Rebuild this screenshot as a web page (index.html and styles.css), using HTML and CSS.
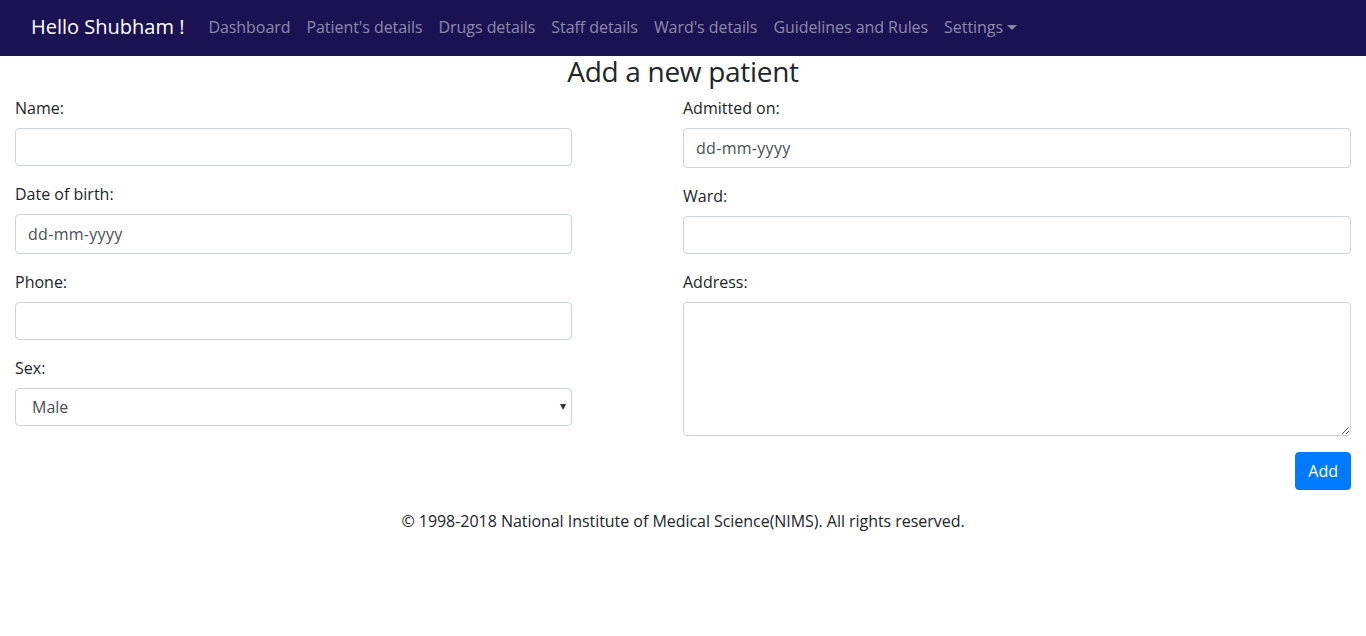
FILE: index.html
```html
<!DOCTYPE html>
<html lang="en">
<head>
<meta charset="utf-8">
<title>Add a new patient</title>
<link rel="stylesheet" href="styles.css">
</head>
<body>
<nav class="navbar">
  <div class="nav-inner">
    <a class="brand" href="#">Hello Shubham !</a>
    <ul class="nav-links">
      <li><a href="#">Dashboard</a></li>
      <li><a href="#">Patient's details</a></li>
      <li><a href="#">Drugs details</a></li>
      <li><a href="#">Staff details</a></li>
      <li><a href="#">Ward's details</a></li>
      <li><a href="#">Guidelines and Rules</a></li>
      <li><a href="#" class="dropdown">Settings<span class="caret"></span></a></li>
    </ul>
  </div>
</nav>
<main class="page">
  <h3 class="title">Add a new patient</h3>
  <form class="form-grid">
    <div class="col-left">
      <div class="group">
        <label>Name:</label>
        <input class="control" type="text">
      </div>
      <div class="group">
        <label>Date of birth:</label>
        <input class="control date" type="text" placeholder="dd-mm-yyyy">
      </div>
      <div class="group">
        <label>Phone:</label>
        <input class="control" type="text">
      </div>
      <div class="group">
        <label>Sex:</label>
        <div class="select-wrap">
          <select class="control select">
            <option>Male</option>
            <option>Female</option>
          </select>
          <span class="select-arrow">▾</span>
        </div>
      </div>
    </div>
    <div class="col-right">
      <div class="group">
        <label>Admitted on:</label>
        <input class="control date" type="text" placeholder="dd-mm-yyyy">
      </div>
      <div class="group">
        <label>Ward:</label>
        <input class="control" type="text">
      </div>
      <div class="group">
        <label>Address:</label>
        <textarea class="control area" rows="5"></textarea>
      </div>
      <div class="actions">
        <button type="button" class="btn">Add</button>
      </div>
    </div>
  </form>
  <footer class="footer">© 1998-2018 National Institute of Medical Science(NIMS). All rights reserved.</footer>
</main>
</body>
</html>
```

FILE: styles.css
```css
* { box-sizing: border-box; }
body {
  margin: 0;
  font-family: "Open Sans", "Lato", sans-serif;
  font-size: 16px;
  line-height: 1.5;
  color: #212529;
  background: #fff;
}
a { text-decoration: none; }
.navbar {
  background: #1b1254;
  height: 56px;
  padding: 0 16px;
}
.nav-inner {
  display: flex;
  align-items: center;
  height: 56px;
  padding: 0 15px 2px;
}
.brand {
  color: #fff;
  font-size: 20px;
  margin-right: 16px;
}
.nav-links {
  display: flex;
  list-style: none;
  margin: 0;
  padding: 0;
}
.nav-links a {
  display: flex;
  align-items: center;
  color: rgba(255,255,255,0.5);
  padding: 8px 8px;
  letter-spacing: -0.06px;
}
.caret {
  display: inline-block;
  margin-left: 4px;
  width: 0;
  height: 0;
  border-top: 5px solid rgba(255,255,255,0.5);
  border-left: 5px solid transparent;
  border-right: 5px solid transparent;
}
.page { padding: 0 15px; }
.title {
  margin: 0 0 10px;
  text-align: center;
  font-size: 28px;
  font-weight: 400;
  line-height: 30px;
  letter-spacing: -0.3px;
}
.form-grid {
  display: grid;
  grid-template-columns: 5fr 1fr 6fr;
}
.col-left { grid-column: 1; }
.col-right { grid-column: 3; }
.group { margin-bottom: 16px; }
.group label {
  display: block;
  margin-bottom: 8px;
  line-height: 24px;
}
.control {
  display: block;
  width: 100%;
  height: 38px;
  padding: 6px 12px;
  font-family: inherit;
  font-size: 16px;
  line-height: 1.5;
  color: #495057;
  background: #fff;
  border: 1px solid #ced4da;
  border-radius: 4px;
}
.control.date { height: 40px; }
.control.date::placeholder { color: #495057; opacity: 1; letter-spacing: 0.3px; }
.control.area { height: 134px; resize: vertical; }
.select-wrap { position: relative; }
.control.select {
  -webkit-appearance: none;
  appearance: none;
  padding-left: 16px;
}
.select-arrow {
  position: absolute;
  right: 6px;
  top: 8px;
  font-size: 12px;
  color: #333;
  pointer-events: none;
  line-height: 20px;
}
.actions {
  display: flex;
  justify-content: flex-end;
}
.btn {
  height: 38px;
  padding: 6px 12px;
  font-family: inherit;
  font-size: 16px;
  line-height: 1.5;
  color: #fff;
  background: #007bff;
  border: 1px solid #007bff;
  border-radius: 4px;
}
.footer {
  text-align: center;
  margin-top: 19px;
  line-height: 24px;
  letter-spacing: -0.04px;
}
```
